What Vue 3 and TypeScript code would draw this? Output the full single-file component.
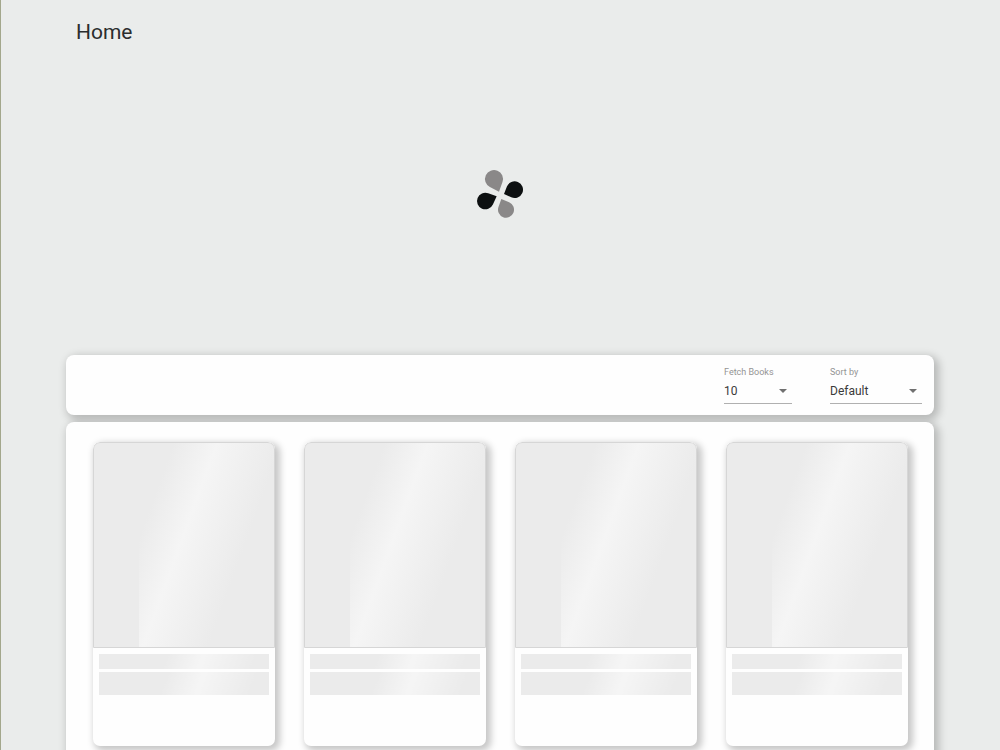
<script setup lang="ts">
import { ref } from 'vue'

interface Petal {
  x: number
  y: number
  r: number
  tipX: number
  tipY: number
  color: string
}

const petals: Petal[] = [
  { x: 87, y: 57, r: 27, tipX: 102, tipY: 95, color: '#8a8888' },
  { x: 149, y: 89, r: 25, tipX: 117, tipY: 102, color: '#0d1011' },
  { x: 61, y: 123, r: 25, tipX: 95, tipY: 109, color: '#0d1011' },
  { x: 123, y: 149, r: 24, tipX: 109, tipY: 117, color: '#8a8888' },
]

// Teardrop: the long arc of a circle closed by its two tangents through the tip.
function teardrop(p: Petal): string {
  const dx = p.tipX - p.x
  const dy = p.tipY - p.y
  const heading = Math.atan2(dy, dx)
  const spread = Math.acos(p.r / Math.hypot(dx, dy))
  const at = (a: number) => `${p.x + p.r * Math.cos(a)} ${p.y + p.r * Math.sin(a)}`
  return `M${p.tipX} ${p.tipY}L${at(heading + spread)}A${p.r} ${p.r} 0 1 1 ${at(heading - spread)}Z`
}

const fetchCount = ref('10')
const sortBy = ref('Default')
const placeholders = 4
</script>

<template>
  <div class="page">
    <header class="top"><h1>Home</h1></header>

    <div class="loader" role="status" aria-label="Loading">
      <svg viewBox="0 0 210 210" aria-hidden="true">
        <path v-for="(p, i) in petals" :key="i" :d="teardrop(p)" :fill="p.color" />
      </svg>
    </div>

    <main>
      <section class="panel toolbar">
        <div class="field count">
          <label for="fetch">Fetch Books</label>
          <div class="control">
            <select id="fetch" v-model="fetchCount">
              <option>10</option>
              <option>20</option>
              <option>30</option>
            </select>
            <svg viewBox="0 0 8 4" aria-hidden="true"><path d="M0 0h8L4 4z" /></svg>
          </div>
        </div>
        <div class="field sort">
          <label for="sort">Sort by</label>
          <div class="control">
            <select id="sort" v-model="sortBy">
              <option>Default</option>
              <option>Title</option>
              <option>Author</option>
            </select>
            <svg viewBox="0 0 8 4" aria-hidden="true"><path d="M0 0h8L4 4z" /></svg>
          </div>
        </div>
      </section>

      <section class="panel books" aria-busy="true">
        <article v-for="n in placeholders" :key="n" class="card">
          <div class="cover shimmer"></div>
          <div class="lines">
            <div class="line shimmer"></div>
            <div class="line tall shimmer"></div>
          </div>
        </article>
      </section>
    </main>
  </div>
</template>

<style>
body {
  background: #eaeceb;
}
</style>

<style scoped>
.page {
  height: 100vh;
  overflow: hidden auto;
  scrollbar-width: none;
  background: #eaeceb;
  box-shadow: inset 1px 0 #a3a78c;
  color: #2b2d2e;
  font-family: Roboto, "Liberation Sans", sans-serif;
}
.top {
  padding: 16px 76px;
}
h1 {
  margin: 0;
  font-size: 21px;
  line-height: 32px;
  font-weight: 400;
}
.loader {
  display: flex;
  justify-content: center;
  padding: 96px 0 125px;
}
.loader svg {
  width: 70px;
  height: 70px;
}
main {
  display: flex;
  flex-direction: column;
  gap: 7px;
  padding: 0 66px 24px;
}
.panel {
  border-radius: 8px;
  background: #fefefe;
  box-shadow: 3px 3px 9px 2px rgba(0, 0, 0, 0.22);
}
.toolbar {
  display: flex;
  justify-content: flex-end;
  gap: 38px;
  padding: 11px 12px;
}
.field {
  display: flex;
  flex-direction: column;
  gap: 1px;
}
.count {
  width: 68px;
}
.sort {
  width: 92px;
}
label {
  color: #949494;
  font-size: 9px;
  line-height: 12px;
}
.control {
  display: grid;
  align-items: center;
  border-bottom: 1px solid #b0b0b0;
}
.control > * {
  grid-area: 1 / 1;
}
select {
  width: 100%;
  height: 24px;
  margin: 0;
  padding: 0;
  border: 0;
  appearance: none;
  background: transparent;
  color: #3a3a3a;
  font: 400 12px/24px Roboto, "Liberation Sans", sans-serif;
}
.control svg {
  justify-self: end;
  width: 8px;
  height: 4px;
  margin-right: 5px;
  fill: #707070;
  pointer-events: none;
}
.books {
  display: grid;
  grid-template-columns: repeat(4, 1fr);
  gap: 29px;
  padding: 20px 26px 29px 27px;
}
.card {
  overflow: hidden;
  border-radius: 7px;
  background: #fefefe;
  box-shadow: 3px 3px 7px 2px rgba(0, 0, 0, 0.22);
}
.cover {
  box-sizing: border-box;
  height: 206px;
  border: 1px solid #d6d6d6;
  border-radius: 7px 7px 0 0;
}
.shimmer {
  background-image: linear-gradient(110deg, #ebebeb 8%, #f5f5f5 18%, #ebebeb 33%);
  background-position: -25% 0;
  background-size: 200% 100%;
}
.lines {
  display: grid;
  gap: 3px;
  padding: 6px 6px 51px;
}
.line {
  height: 15px;
}
.tall {
  height: 23px;
}
</style>
